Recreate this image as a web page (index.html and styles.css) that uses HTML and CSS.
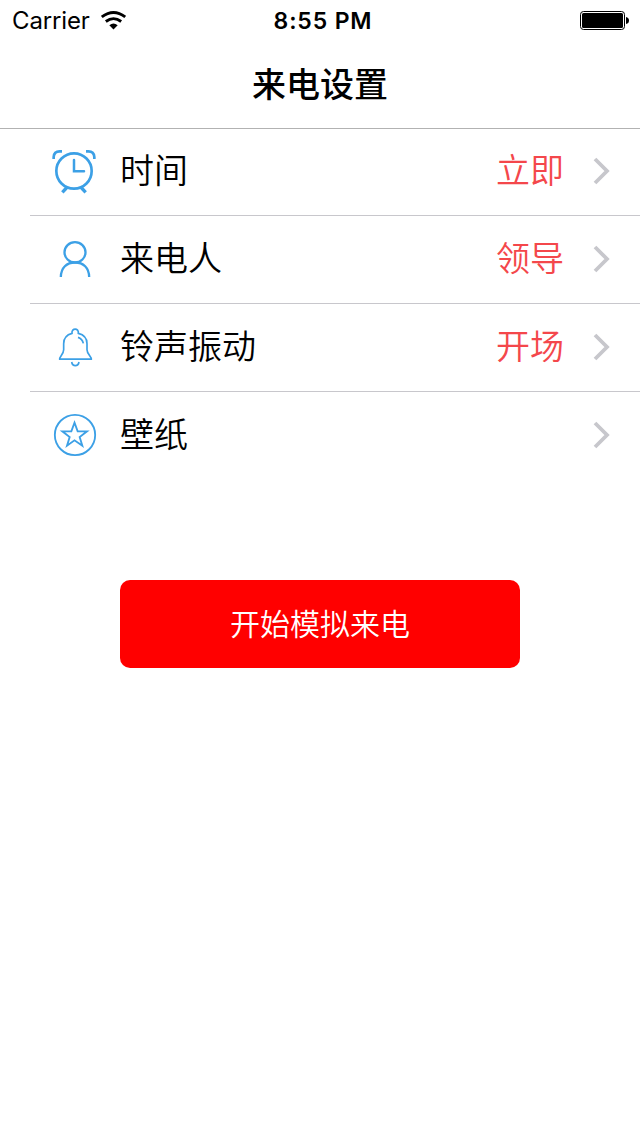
FILE: index.html
```html
<!DOCTYPE html>
<html lang="zh-CN">
<head>
<meta charset="utf-8">
<title>来电设置</title>
<link rel="stylesheet" href="styles.css">
</head>
<body>
<header class="header">
  <div class="status">
    <div class="status-left">
      <span class="carrier">Carrier</span>
      <svg class="wifi" viewBox="0 0 75 57"><g fill="none" stroke="#000" stroke-width="8.5"><path d="M2.500 18Q37.500-9 72.500 18"/><path d="M14.500 31.500Q37.500 14 60.500 31.500"/></g><path d="M25 42.500Q37.500 32 50 42.500L37.500 55.500Z"/></svg>
    </div>
    <span class="clock">8:55 PM</span>
    <div class="status-right">
      <svg class="battery" viewBox="0 0 50 20"><rect x=".5" y=".5" width="44" height="18" rx="3" fill="none" stroke="#000"/><rect x="2" y="2" width="41" height="15" rx="1.500"/><path d="M46 6q3 .5 3 3.500t-3 3.500z"/></svg>
    </div>
  </div>
  <h1 class="title">来电设置</h1>
</header>
<main>
  <ul class="list">
    <li class="row">
      <svg class="icon" viewBox="0 0 210 192"><g stroke-width="8"><circle cx="102" cy="93" r="53"/><path d="M102 60V94H132" stroke-width="7.500" stroke-linecap="round"/><path d="M41 57V51Q42 34 59 34H66M138 34H145Q162 34 163 51V57"/><path d="M82 141L67 157M122 141L137 157" stroke-width="10"/></g></svg>
      <span class="label">时间</span><span class="value">立即</span>
      <svg class="chevron" viewBox="0 0 18 28"><path d="M2 2L14 14L2 26"/></svg>
    </li>
    <li class="row">
      <svg class="icon" viewBox="0 0 210 192"><g stroke-width="7"><ellipse cx="105" cy="73" rx="31.500" ry="30.500"/><path d="M62.500 147C63 119 80 103.500 105 103.500S147 119 147.500 147"/></g></svg>
      <span class="label">来电人</span><span class="value">领导</span>
      <svg class="chevron" viewBox="0 0 18 28"><path d="M2 2L14 14L2 26"/></svg>
    </li>
    <li class="row">
      <svg class="icon" viewBox="0 0 210 192"><g stroke-width="5"><path d="M59 129.500C58 123 71 114 71 101V83C71 67 81 56 96 52C94 35 117 35 115 52C131 56 141 67 141 83V101C141 114 155 123 154 129.500Z"/><path d="M114 64Q127 68 130 82"/><path d="M95 138Q97 149 106 149T117 138"/></g></svg>
      <span class="label">铃声振动</span><span class="value">开场</span>
      <svg class="chevron" viewBox="0 0 18 28"><path d="M2 2L14 14L2 26"/></svg>
    </li>
    <li class="row">
      <svg class="icon" viewBox="0 0 210 192"><g stroke-width="5.500"><circle cx="105" cy="93" r="60.500"/><path d="M103.500 56L113 82H141L119 99L127 125L103.500 109L81 125L89 99L67 82H94Z"/></g></svg>
      <span class="label">壁纸</span>
      <svg class="chevron" viewBox="0 0 18 28"><path d="M2 2L14 14L2 26"/></svg>
    </li>
  </ul>
  <button class="start" type="button">开始模拟来电</button>
</main>
</body>
</html>
```
FILE: styles.css
```css
* { box-sizing: border-box; }
body {
  margin: 0;
  min-height: 1136px;
  background: #fff;
  color: #000;
  font-family: Inter, "Noto Sans CJK SC", sans-serif;
}
.header {
  height: 129px;
  margin-bottom: -1px;
  border-bottom: 1px solid #b2b2b2;
}
.status {
  display: grid;
  grid-template-columns: 1fr auto 1fr;
  align-items: center;
  height: 42px;
  padding: 0 10px 0 12px;
  font-size: 24px;
  line-height: 42px;
}
.status-left { display: flex; align-items: center; gap: 11px; }
.carrier { letter-spacing: -.15px; }
.wifi { width: 25px; height: 19px; margin-top: -2px; }
.clock { padding-left: 4px; font-weight: 600; font-size: 23px; letter-spacing: .85px; }
.status-right { display: flex; justify-content: flex-end; }
.battery { width: 50px; height: 20px; margin-top: -1px; }
.title {
  margin: 0;
  height: 86px;
  font: 500 34px/82px "Noto Sans CJK SC", sans-serif;
  text-align: center;
}
.list { margin: 0; padding: 0; list-style: none; }
.row {
  position: relative;
  display: flex;
  align-items: center;
  height: 88px;
  padding: 0 29px 0 40px;
  font: 400 34px/82px "Noto Sans CJK SC", sans-serif;
}
.row:not(:last-child)::after {
  content: "";
  position: absolute;
  right: 0;
  bottom: 0;
  left: 30px;
  height: 1px;
  background: #c8c7cc;
}
.icon {
  width: 70px;
  height: 64px;
  margin-right: 10px;
  fill: none;
  stroke: #3ca0e6;
}
.label, .value { height: 88px; font-weight: 350; }
.label { flex: 1; }
.value { margin-right: 29px; color: #f4474b; }
.chevron {
  width: 18px;
  height: 28px;
  margin-bottom: 2px;
  fill: none;
  stroke: #c7c7cc;
  stroke-width: 3.8;
}
.start {
  display: block;
  width: 400px;
  height: 88px;
  margin: 100px auto 0;
  padding: 0 0 4px;
  border: 0;
  border-radius: 10px;
  background: #f00;
  color: #fff;
  font: 350 30px/84px "Noto Sans CJK SC", sans-serif;
}
```
